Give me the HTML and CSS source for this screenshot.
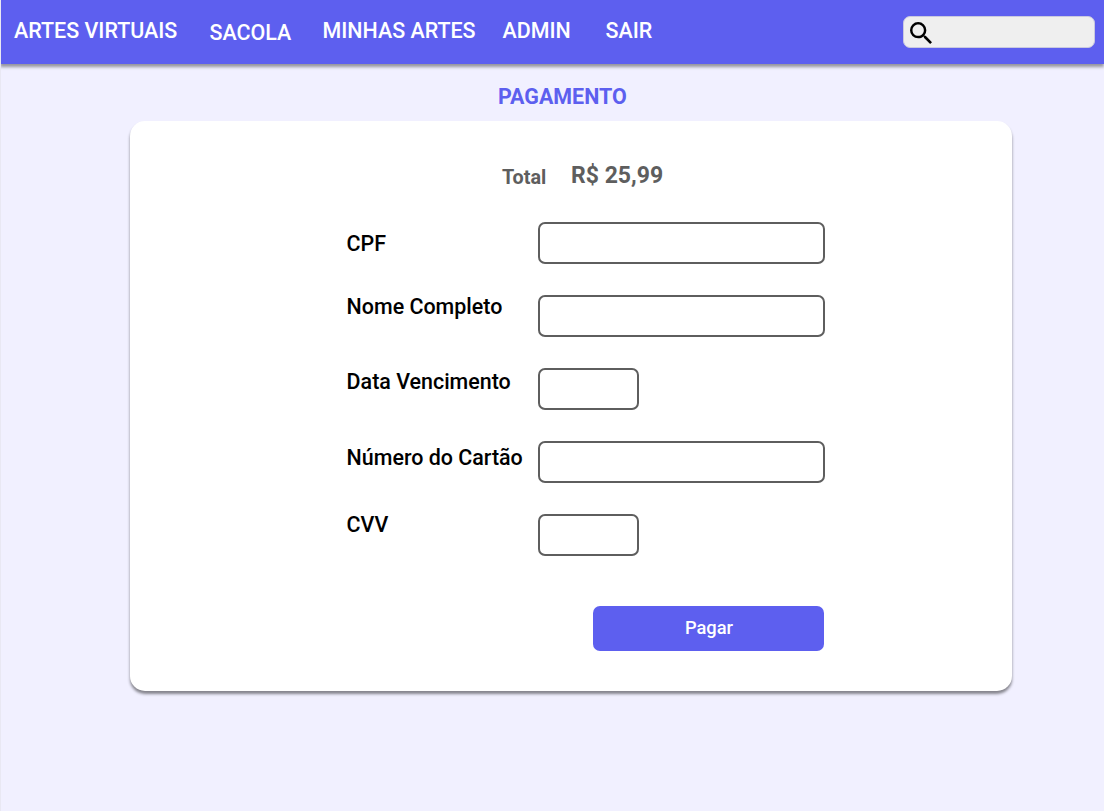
FILE: index.html
```html
<!DOCTYPE html>
<html lang="pt-BR">
<head>
<meta charset="utf-8">
<title>Pagamento</title>
<link rel="stylesheet" href="styles.css">
</head>
<body>
<header class="navbar">
  <nav class="nav">
    <a class="brand">ARTES VIRTUAIS</a>
    <a class="bag">SACOLA</a>
    <a class="arts">MINHAS ARTES</a>
    <a class="admin">ADMIN</a>
    <a class="exit">SAIR</a>
  </nav>
  <div class="search">
    <svg class="search-icon" viewBox="3 3 17.49 17.49"><path d="M15.5 14h-.79l-.28-.27A6.471 6.471 0 0 0 16 9.5 6.5 6.5 0 1 0 9.5 16c1.61 0 3.09-.59 4.23-1.57l.27.28v.79l5 4.99L20.49 19l-4.99-5zm-6 0C7.01 14 5 11.99 5 9.5S7.01 5 9.5 5 14 7.01 14 9.5 11.99 14 9.5 14z"/></svg>
  </div>
</header>
<main class="page">
  <h1 class="title">PAGAMENTO</h1>
  <section class="card">
    <div class="total"><span class="total-label">Total</span><span class="total-value">R$ 25,99</span></div>
    <form class="form">
      <label class="label cpf">CPF</label><span class="field"></span>
      <label class="label name">Nome Completo</label><span class="field"></span>
      <label class="label date">Data Vencimento</label><span class="field short"></span>
      <label class="label number">Número do Cartão</label><span class="field"></span>
      <label class="label cvv">CVV</label><span class="field short"></span>
    </form>
    <button class="pay">Pagar</button>
  </section>
</main>
</body>
</html>
```
FILE: styles.css
```css
* { box-sizing: border-box; }
body { margin: 0; min-height: 811px; background: #f1f0ff; border-left: 1px solid #e9e8f3; font-family: Roboto, sans-serif; font-weight: 500; }
.navbar { display: flex; justify-content: space-between; height: 64px; margin-left: -1px; padding: 16px 9px 0 13px; border-left: 1px solid #9c9df0; background: #5d5fef; box-shadow: 0 3px 3px rgba(0,0,0,.38); }
.nav { display: flex; color: #fff; font-size: 21.45px; line-height: 30px; white-space: nowrap; }
.brand { width: 195.5px; }
.bag { width: 113px; padding-top: 2px; }
.arts { width: 180px; }
.admin { width: 103px; }
.search { width: 192px; height: 32px; padding: 5px 5.5px; border: 1px solid #c9c9e0; border-radius: 7px; background: #efefef; }
.search-icon { display: block; width: 22px; height: 22px; }
.page { padding-left: 129px; }
.title { margin: 0; padding: 18px 0 0 368px; height: 57px; font-size: 21.45px; line-height: 30px; font-weight: 700; color: #5d5fef; }
.card { width: 882px; height: 570px; padding: 39px 0 0 216.6px; border-radius: 15px; background: #fff; box-shadow: 0 3px 3px rgba(0,0,0,.45); }
.total { display: flex; height: 62px; padding-left: 155.4px; color: #5e5e5e; font-weight: 700; line-height: 30px; }
.total-label { width: 69px; padding-top: 3px; font-size: 19.8px; }
.total-value { padding-top: 1px; font-size: 23px; }
.form { display: grid; grid-template-columns: 191.4px 287px; grid-auto-rows: 42px; row-gap: 31px; }
.label { font-size: 21.45px; line-height: 30px; white-space: nowrap; }
.cpf { padding-top: 7px; }
.name { margin-top: -3px; }
.date { margin-top: -1px; }
.number { padding-top: 2px; }
.cvv { margin-top: -4px; }
.field { width: 286.6px; height: 41.5px; border: 2px solid #5e5e5e; border-radius: 7px; background: #fff; }
.field.short { width: 100.6px; }
.pay { display: block; width: 231px; height: 45px; margin: 50px 0 0 246.9px; padding: 0 0 3px; border: 0; border-radius: 7px; background: #5d5fef; color: #fff; font: 500 18.3px Roboto, sans-serif; }
```
